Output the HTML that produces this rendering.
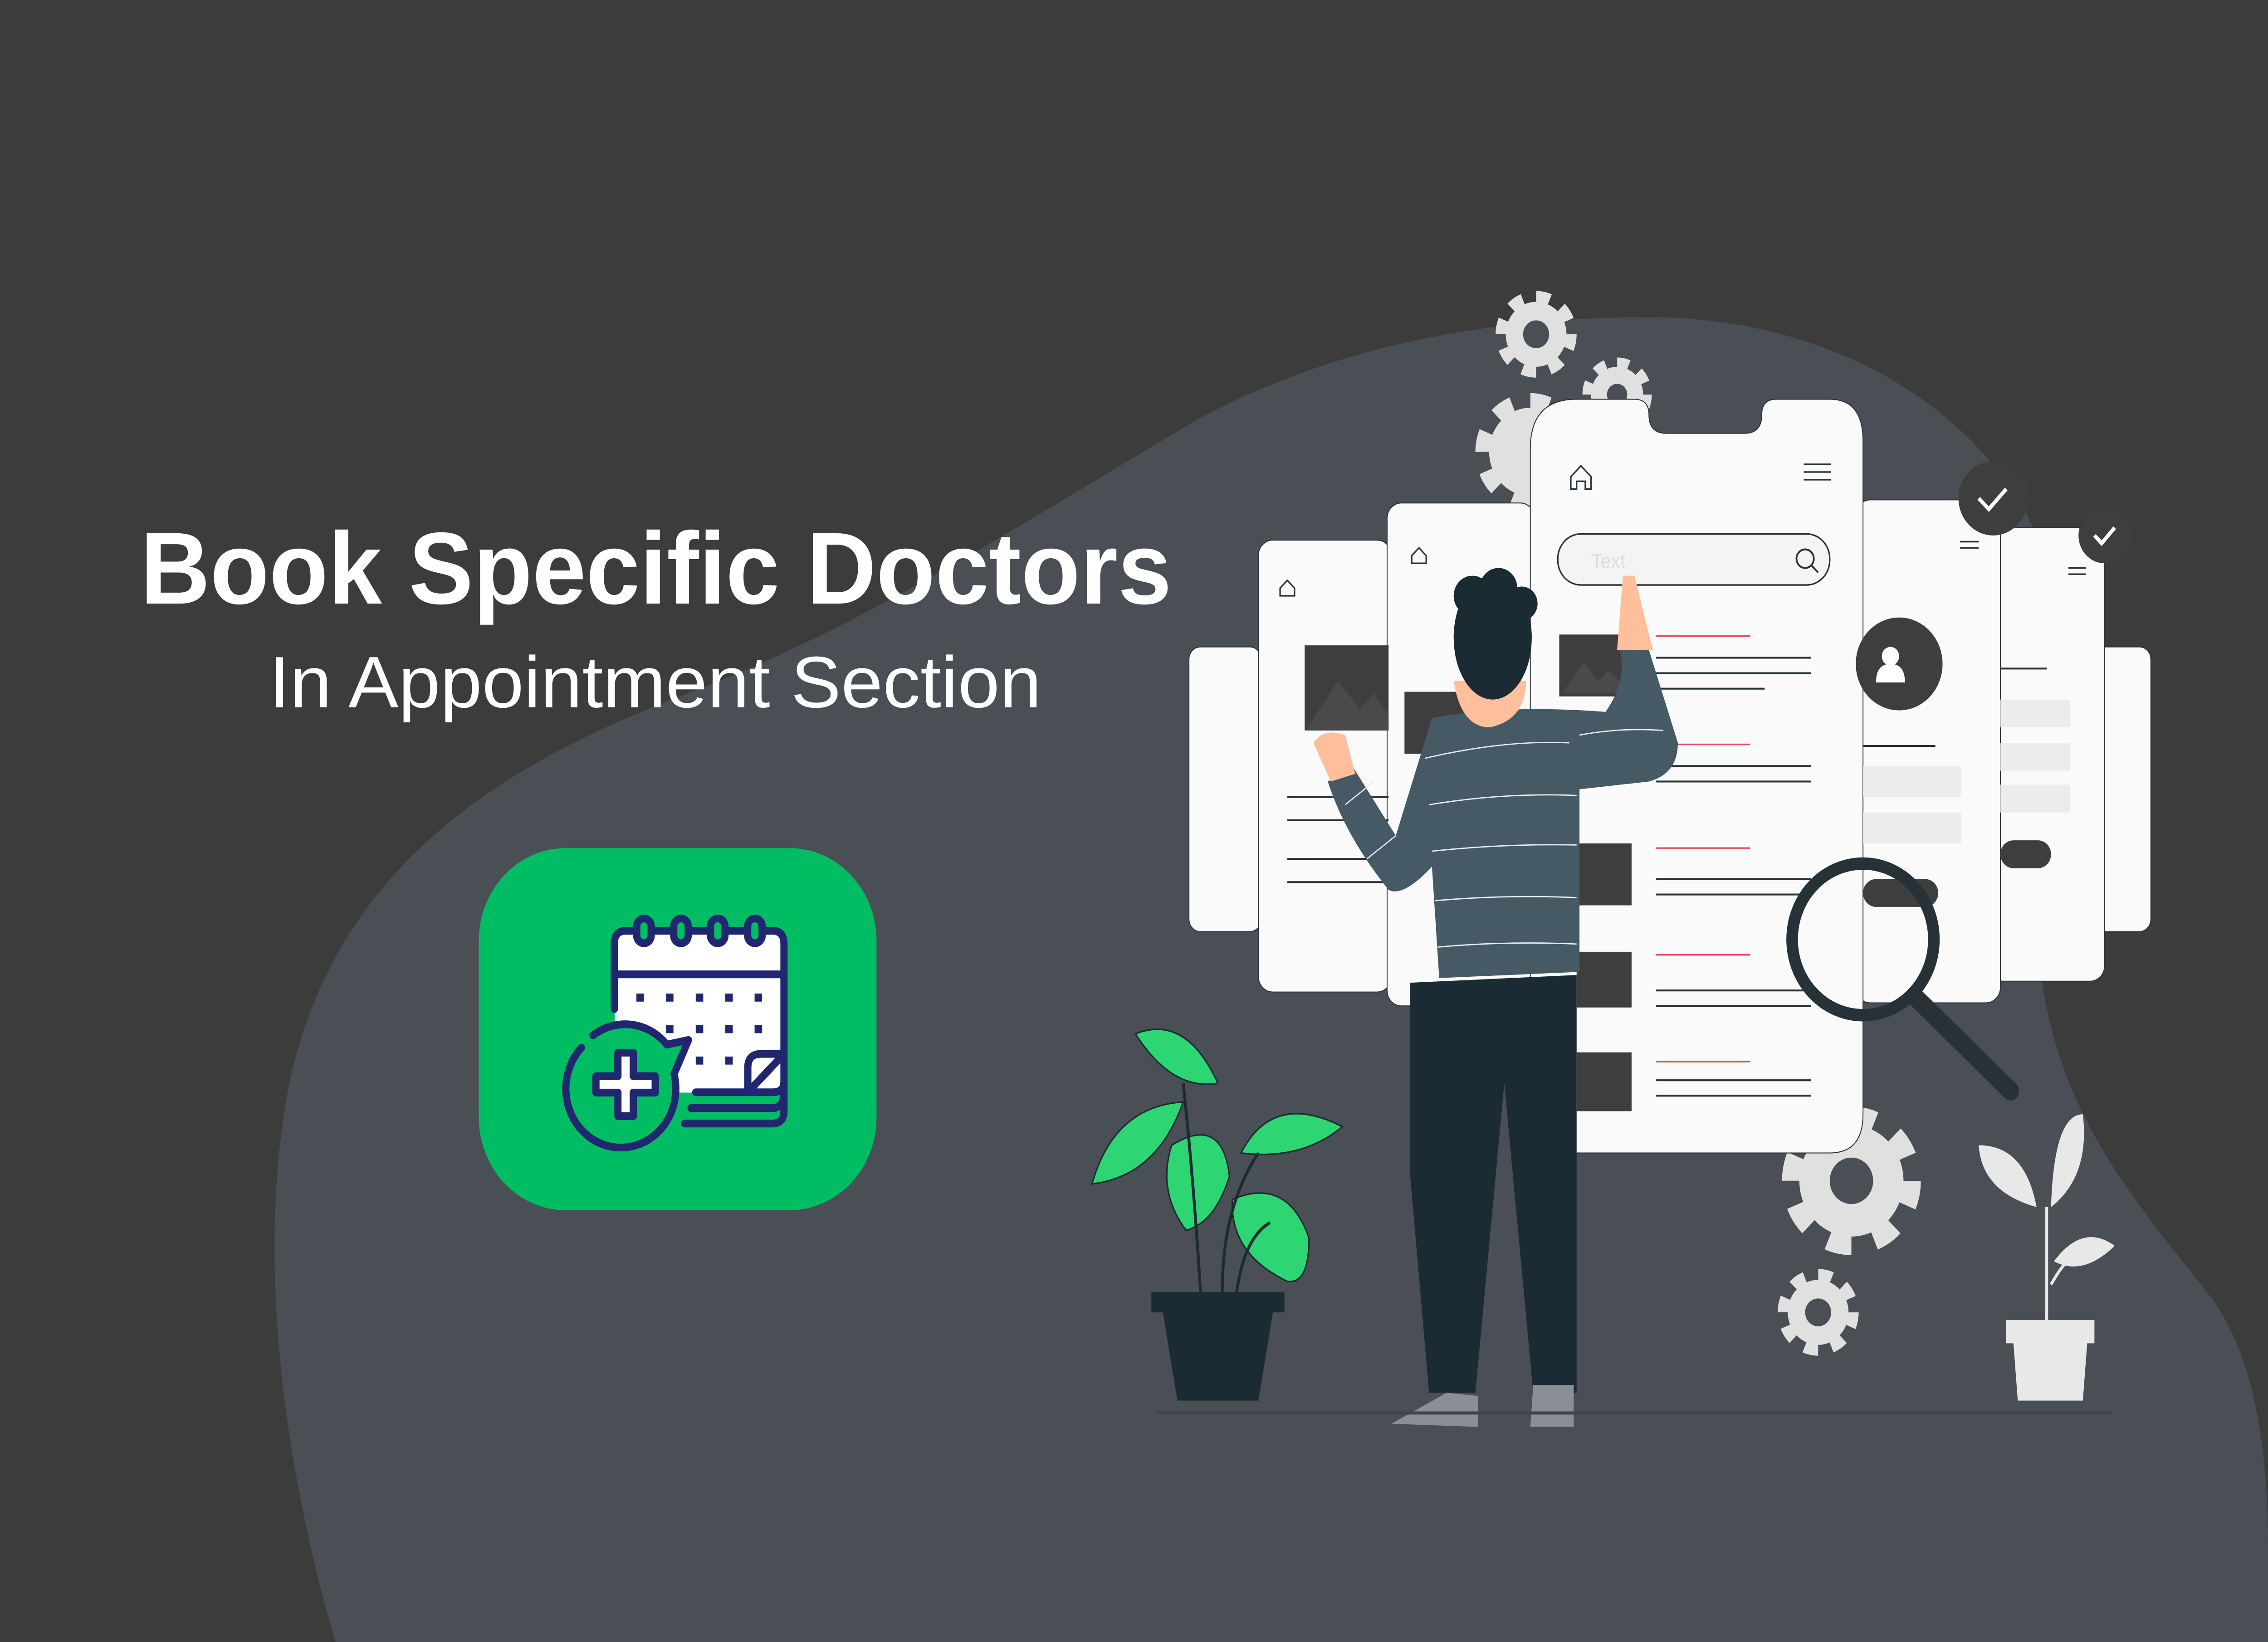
<!DOCTYPE html>
<html><head><meta charset="utf-8"><style>
html,body{margin:0;padding:0;background:#3c3c3c;overflow:hidden;width:100vw;height:100vh;}
svg{display:block;position:absolute;left:0;top:0;width:100vw;height:100vh;}
</style></head><body>
<svg viewBox="0 0 1568 1061" preserveAspectRatio="none" xmlns="http://www.w3.org/2000/svg">
<defs>
<g id="gear"><circle r="0.75" fill="#e0e0e0"/><circle r="0.86" fill="none" stroke="#e0e0e0" stroke-width="0.28" stroke-dasharray="0.34 0.3355"/></g>
</defs>
<rect width="1568" height="1061" fill="#3c3c3c"/>
<path d="M232 1061 C200 960 175 820 200 700 C230 570 330 500 470 450 C600 405 720 330 830 270 C930 220 1040 205 1140 205 C1250 205 1350 250 1400 330 C1440 400 1400 520 1410 620 C1420 720 1480 780 1530 840 C1560 880 1568 940 1568 1000 L1568 1061 Z" fill="#4a4e55"/>
<text x="97" y="390" font-family="Liberation Sans, sans-serif" font-weight="bold" font-size="66" fill="#fff" textLength="713" lengthAdjust="spacingAndGlyphs">Book Specific Doctors</text>
<text x="186" y="457" font-family="Liberation Sans, sans-serif" font-size="47" fill="#fff" textLength="534" lengthAdjust="spacingAndGlyphs">In Appointment Section</text>
<rect x="331" y="548" width="275" height="234" rx="60" fill="#00bd63"/>
<rect x="425" y="602" width="117" height="104" fill="#fff"/>
<g stroke="#212670" stroke-width="5" stroke-linecap="round" stroke-linejoin="round" fill="none">
<path d="M424.7 652 V610 Q424.7 601.4 433 601.4 H534 Q542 601.4 542 610 V699 Q542 705.8 534 705.8 H481"/>
<line x1="424.7" y1="629.6" x2="542" y2="629.6"/>
<path d="M542 700 V718 Q542 726 534 726 H473.3"/>
<path d="M542 705 Q542 716 534 716 H477.8"/>
<path d="M517 705.8 V690 Q517 681 526 681 H542 M517 705.8 L542 681"/>
<g fill="#00bd63"><rect x="440.2" y="593.5" width="10" height="16" rx="5"/><rect x="465.8" y="593.5" width="10" height="16" rx="5"/><rect x="491.2" y="593.5" width="10" height="16" rx="5"/><rect x="516.9" y="593.5" width="10" height="16" rx="5"/></g>
</g>
<g fill="#212670">
<rect x="440" y="642" width="5.2" height="5.2"/><rect x="460.4" y="642" width="5.2" height="5.2"/><rect x="481" y="642" width="5.2" height="5.2"/><rect x="501.4" y="642" width="5.2" height="5.2"/><rect x="521.7" y="642" width="5.2" height="5.2"/>
<rect x="460.4" y="662.4" width="5.2" height="5.2"/><rect x="481" y="662.4" width="5.2" height="5.2"/><rect x="501.4" y="662.4" width="5.2" height="5.2"/><rect x="521.7" y="662.4" width="5.2" height="5.2"/>
<rect x="481" y="682.7" width="5.2" height="5.2"/><rect x="501.4" y="682.7" width="5.2" height="5.2"/>
</g>
<g stroke="#212670" stroke-width="5" stroke-linecap="round" stroke-linejoin="round">
<path d="M402 677 A38 38 0 1 0 466 694 L476 672 L461 675 A38 38 0 0 0 410 669" fill="#00bd63"/>
<path d="M427.2 680.2 h10.6 v15.2 h15.2 v10.6 h-15.2 v15.2 h-10.6 v-15.2 h-15.2 v-10.6 h15.2 z" fill="#fff"/>
</g>
<!-- gears -->
<use href="#gear" transform="translate(1062 216) scale(28)"/>
<use href="#gear" transform="translate(1118 255) scale(24)"/>
<use href="#gear" transform="translate(1058 292) scale(38)"/>
<use href="#gear" transform="translate(1280 763) scale(48)"/>
<use href="#gear" transform="translate(1257 848) scale(28)"/>
<g fill="#4a4e55"><circle cx="1062" cy="216" r="9"/><circle cx="1280" cy="763" r="15"/><circle cx="1257" cy="848" r="9"/><circle cx="1118" cy="255" r="7"/></g>
<!-- cards -->
<g fill="#fafafa" stroke="#263238" stroke-width="0.6">
<rect x="822" y="418" width="50" height="184" rx="8"/>
<rect x="1440" y="418" width="47" height="184" rx="8"/>
<rect x="870" y="349" width="92" height="292" rx="10"/>
<rect x="1375" y="341" width="80" height="293" rx="10"/>
<rect x="959" y="325" width="102" height="325" rx="10"/>
<rect x="1283" y="323" width="100" height="325" rx="10"/>
<path d="M1058 290 Q1058 258 1090 258 H1130 Q1140 258 1140 268 Q1140 280 1152 280 H1206 Q1218 280 1218 268 Q1218 258 1228 258 H1265 Q1288 258 1288 285 V720 Q1288 745 1265 745 H1080 Q1058 745 1058 720 Z"/>
</g>
<g fill="none" stroke="#263238" stroke-width="1">
<path d="M1086 316 V308 L1093 301 L1100 308 V316 H1096 V311 H1090 V316 Z"/>
<path d="M885 385 V380 L890 375 L895 380 V385 Z"/>
<path d="M976 364 V359 L981 354 L986 359 V364 Z"/>
<path d="M1247 300 H1266 M1247 305 H1266 M1247 310 H1266"/>
<path d="M1355 350 H1368 M1355 354 H1368 M1430 367 H1442 M1430 371 H1442"/>
</g>
<rect x="1077" y="345" width="188" height="33" rx="16" fill="#f4f4f4" stroke="#263238" stroke-width="1"/>
<text x="1100" y="367" font-family="Liberation Sans, sans-serif" font-size="13" fill="#ddd">Text</text>
<circle cx="1248" cy="361" r="6" fill="none" stroke="#263238" stroke-width="1.2"/>
<line x1="1252" y1="365" x2="1257" y2="370" stroke="#263238" stroke-width="1.2"/>
<g fill="#3e3e3e">
<rect x="902" y="417" width="58" height="55"/><rect x="971" y="447" width="45" height="40"/><rect x="1078" y="410" width="52" height="40"/>
<rect x="1090" y="545" width="38" height="40"/><rect x="1090" y="615" width="38" height="36"/><rect x="1090" y="680" width="38" height="38"/>
<circle cx="1313" cy="429" r="30"/><rect x="1288" y="568" width="52" height="18" rx="9"/><rect x="1383" y="543" width="35" height="18" rx="9"/>
<circle cx="1378" cy="322" r="24"/><circle cx="1455" cy="346" r="18"/>
</g>
<g fill="#4a4a4a"><path d="M904 470 L925 440 L940 458 L950 448 L960 462 V472 H904 Z"/><path d="M1080 448 L1095 428 L1105 440 L1112 433 L1128 448 Z"/></g>
<g fill="#ececec"><rect x="1288" y="495" width="68" height="20"/><rect x="1288" y="525" width="68" height="20"/><rect x="1383" y="452" width="48" height="18"/><rect x="1383" y="480" width="48" height="18"/><rect x="1383" y="507" width="48" height="18"/></g>
<g stroke="#263238" stroke-width="1.2">
<line x1="1145" y1="425" x2="1252" y2="425"/><line x1="1145" y1="435" x2="1252" y2="435"/><line x1="1145" y1="445" x2="1220" y2="445"/>
<line x1="1145" y1="495" x2="1252" y2="495"/><line x1="1145" y1="505" x2="1252" y2="505"/>
<line x1="1145" y1="568" x2="1252" y2="568"/><line x1="1145" y1="578" x2="1252" y2="578"/>
<line x1="1145" y1="640" x2="1252" y2="640"/><line x1="1145" y1="650" x2="1252" y2="650"/>
<line x1="1145" y1="698" x2="1252" y2="698"/><line x1="1145" y1="708" x2="1252" y2="708"/>
<line x1="890" y1="515" x2="960" y2="515"/><line x1="890" y1="530" x2="960" y2="530"/><line x1="890" y1="555" x2="960" y2="555"/><line x1="890" y1="570" x2="960" y2="570"/>
<line x1="1288" y1="482" x2="1338" y2="482"/><line x1="1383" y1="432" x2="1415" y2="432"/>
</g>
<g stroke="#e84c5a" stroke-width="1"><line x1="1145" y1="411" x2="1210" y2="411"/><line x1="1145" y1="481" x2="1210" y2="481"/><line x1="1145" y1="548" x2="1210" y2="548"/><line x1="1145" y1="617" x2="1210" y2="617"/><line x1="1145" y1="686" x2="1210" y2="686"/></g>
<circle cx="1307" cy="424" r="6" fill="#fff"/><path d="M1297 441 Q1297 429 1307 429 Q1317 429 1317 441 Z" fill="#fff"/>
<path d="M1368 322 l7 7 l12 -13 M1448 346 l5 5 l9 -10" stroke="#fff" stroke-width="2.5" fill="none"/>
<!-- person -->
<path d="M975 635 L1090 630 L1090 900 L1060 900 L1040 700 L1020 900 L988 900 L975 760 Z" fill="#1b2b33"/>
<path d="M962 920 L1000 900 L1022 902 L1022 922 Z M1060 895 L1088 895 L1088 922 L1058 922 Z" fill="#8a8f96"/>
<path d="M990 464 Q1040 455 1110 460 Q1125 440 1120 420 L1140 420 L1160 480 Q1160 500 1140 505 L1092 510 L1092 628 L995 632 L990 560 Q970 580 960 575 Q930 540 918 505 L935 495 L965 540 Z" fill="#455a64"/>
<g stroke="#e8eef0" stroke-width="0.8" fill="none"><path d="M985 490 Q1040 478 1085 480"/><path d="M988 520 Q1040 512 1090 514"/><path d="M990 550 Q1040 545 1090 546"/><path d="M992 582 Q1040 578 1090 580"/><path d="M994 612 Q1040 608 1090 610"/><path d="M1092 475 Q1120 470 1150 472"/><path d="M930 520 L950 505"/><path d="M945 555 L965 540"/></g>
<path d="M1005 440 Q1010 470 1030 470 Q1055 465 1055 440 Z" fill="#ffbf9d"/>
<ellipse cx="1032" cy="412" rx="27" ry="40" fill="#1b2b33"/>
<circle cx="1018" cy="385" r="13" fill="#1b2b33"/><circle cx="1036" cy="380" r="13" fill="#1b2b33"/><circle cx="1052" cy="390" r="11" fill="#1b2b33"/>
<path d="M1118 420 L1122 372 L1130 372 L1140 410 L1143 420 Z" fill="#ffbf9d"/>
<path d="M908 480 Q915 470 930 475 L937 500 L920 505 Z" fill="#ffbf9d"/>
<!-- magnifier -->
<circle cx="1288" cy="607" r="49" fill="none" stroke="#263238" stroke-width="8"/>
<line x1="1325" y1="645" x2="1390" y2="705" stroke="#263238" stroke-width="12" stroke-linecap="round"/>
<!-- ground -->
<line x1="800" y1="913" x2="1460" y2="913" stroke="#3f444b" stroke-width="2"/>
<!-- left plant -->
<g fill="#2ed573" stroke="#1b2b33" stroke-width="1">
<path d="M785 668 Q820 655 842 700 Q810 705 785 668 Z"/>
<path d="M755 765 Q770 715 818 712 Q800 760 755 765 Z"/>
<path d="M810 740 Q845 720 850 760 Q840 790 820 795 Q800 770 810 740 Z"/>
<path d="M858 745 Q880 705 928 728 Q900 750 858 745 Z"/>
<path d="M852 775 Q890 760 905 800 Q905 830 890 828 Q850 810 852 775 Z"/>
</g>
<g stroke="#1b2b33" stroke-width="2" fill="none"><path d="M830 835 Q825 760 818 700"/><path d="M845 835 Q845 780 870 745"/><path d="M855 835 Q860 800 878 790"/></g>
<path d="M796 835 H888 V848 H880 L870 905 H814 L804 848 H796 Z" fill="#1b2b33"/>
<!-- right plant -->
<g fill="#e8e8e8"><path d="M1408 780 Q1370 770 1368 740 Q1400 740 1408 780 Z"/><path d="M1418 780 Q1420 720 1440 720 Q1445 760 1418 780 Z"/><path d="M1420 815 Q1440 790 1462 805 Q1440 825 1420 815 Z"/></g>
<path d="M1415 855 V780 M1418 830 Q1430 810 1440 808" stroke="#e8e8e8" stroke-width="2" fill="none"/>
<path d="M1387 853 H1448 V868 H1443 L1440 905 H1395 L1392 868 H1387 Z" fill="#e8e8e8"/>
</svg>
</body></html>
